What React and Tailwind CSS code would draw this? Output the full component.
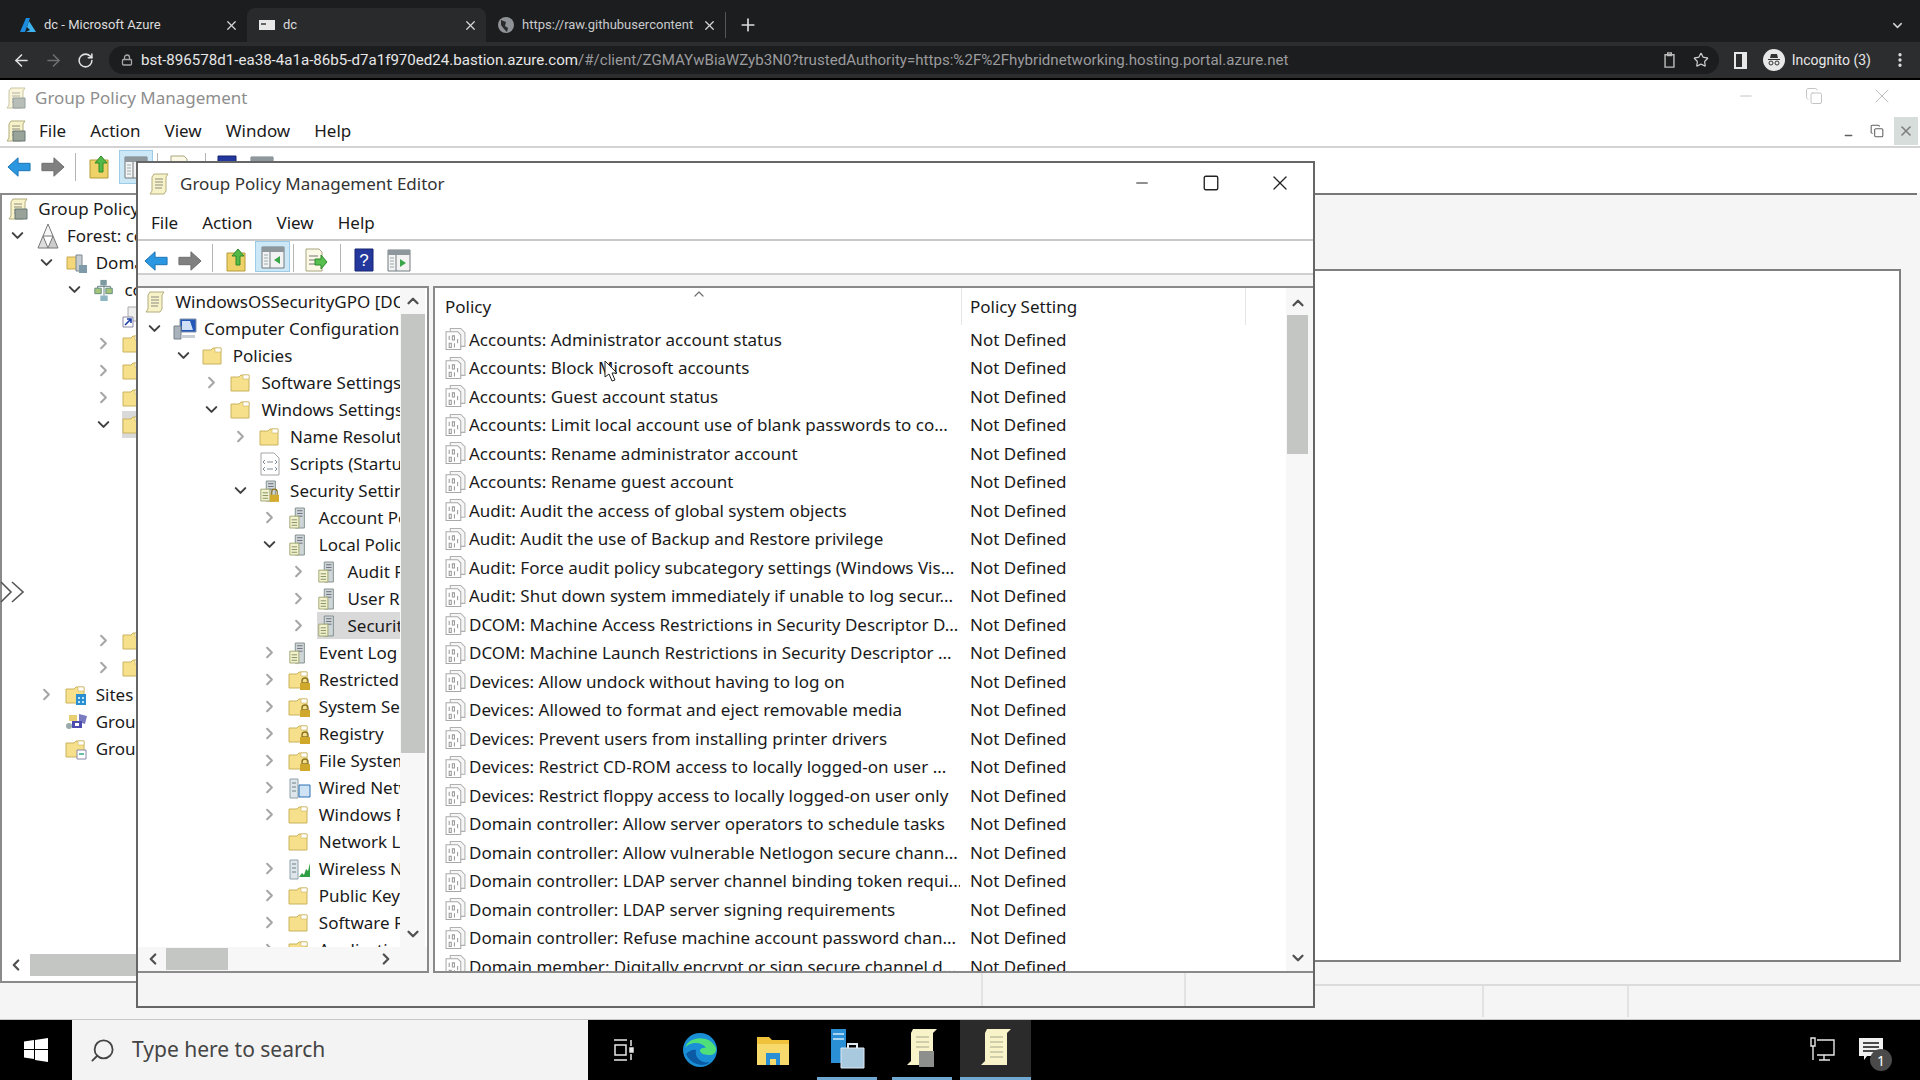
import { ArrowLeft, ArrowRight, RotateCw, Lock, Star, X, Plus, ChevronDown, ChevronRight, ChevronUp, ChevronLeft, MoreVertical, Search, Minus, Square, Copy } from 'lucide-react';

const policies = [
    'Accounts: Administrator account status',
    'Accounts: Block Microsoft accounts',
    'Accounts: Guest account status',
    'Accounts: Limit local account use of blank passwords to co...',
    'Accounts: Rename administrator account',
    'Accounts: Rename guest account',
    'Audit: Audit the access of global system objects',
    'Audit: Audit the use of Backup and Restore privilege',
    'Audit: Force audit policy subcategory settings (Windows Vis...',
    'Audit: Shut down system immediately if unable to log secur...',
    'DCOM: Machine Access Restrictions in Security Descriptor D...',
    'DCOM: Machine Launch Restrictions in Security Descriptor ...',
    'Devices: Allow undock without having to log on',
    'Devices: Allowed to format and eject removable media',
    'Devices: Prevent users from installing printer drivers',
    'Devices: Restrict CD-ROM access to locally logged-on user ...',
    'Devices: Restrict floppy access to locally logged-on user only',
    'Domain controller: Allow server operators to schedule tasks',
    'Domain controller: Allow vulnerable Netlogon secure chann...',
    'Domain controller: LDAP server channel binding token requi...',
    'Domain controller: LDAP server signing requirements',
    'Domain controller: Refuse machine account password chan...',
    'Domain member: Digitally encrypt or sign secure channel d...',
];

// depth, arrow (down / right / none), icon, label
const editorTree = [
    [0, 'none', 'scroll', 'WindowsOSSecurityGPO [DC'],
    [1, 'down', 'computer', 'Computer Configuration'],
    [2, 'down', 'folder', 'Policies'],
    [3, 'right', 'folder', 'Software Settings'],
    [3, 'down', 'folder', 'Windows Settings'],
    [4, 'right', 'folder', 'Name Resolution'],
    [4, 'none', 'script', 'Scripts (Startup'],
    [4, 'down', 'secure', 'Security Settings'],
    [5, 'right', 'server', 'Account Policies'],
    [5, 'down', 'server', 'Local Policies'],
    [6, 'right', 'server', 'Audit Policy'],
    [6, 'right', 'server', 'User Rights'],
    [6, 'right', 'server', 'Security Options', true],
    [5, 'right', 'server', 'Event Log'],
    [5, 'right', 'lockfolder', 'Restricted Groups'],
    [5, 'right', 'lockfolder', 'System Services'],
    [5, 'right', 'lockfolder', 'Registry'],
    [5, 'right', 'lockfolder', 'File System'],
    [5, 'right', 'wired', 'Wired Network'],
    [5, 'right', 'folder', 'Windows Firewall'],
    [5, 'none', 'folder', 'Network List'],
    [5, 'right', 'wireless', 'Wireless Network'],
    [5, 'right', 'folder', 'Public Key'],
    [5, 'right', 'folder', 'Software Restriction'],
    [5, 'right', 'folder', 'Application Control'],
];

const mainTree = [
    [0, 'none', 'manager', 'Group Policy Management'],
    [1, 'down', 'forest', 'Forest: contoso'],
    [2, 'down', 'domains', 'Domains'],
    [3, 'down', 'domain', 'contoso'],
    [4, 'none', 'shortcut', ''],
    [4, 'right', 'folder', ''],
    [4, 'right', 'folder', ''],
    [4, 'right', 'folder', ''],
    [4, 'down', 'folder', '', true],
    null, null, null, null, null, null, null,
    [4, 'right', 'folder', ''],
    [4, 'right', 'folder', ''],
    [2, 'right', 'sites', 'Sites'],
    [2, 'none', 'modeling', 'Group Policy Modeling'],
    [2, 'none', 'results', 'Group Policy Results'],
];

const Folder = ({ children }) => (
    <svg viewBox="0 0 22 22" className="h-[22px] w-[22px] shrink-0">
        <path d="M1 5h8l2-2h8v16H1z" fill="#f7e08c" stroke="#c9b25e" />
        <path d="M13 3h6v4h-6z" fill="#fff" stroke="#c9b25e" strokeWidth="0.6" />
        {children}
    </svg>
);

const TreeIcon = ({ type }) => {
    if (type === 'folder') return <Folder />;
    if (type === 'lockfolder')
        return (
            <Folder>
                <path d="M14 12a3 3 0 0 1 6 0v2h-6z" fill="none" stroke="#8a7420" strokeWidth="1.4" />
                <path d="M12 14h10v7H12z" fill="#d0a92c" />
            </Folder>
        );
    if (type === 'sites')
        return (
            <Folder>
                <path d="M11 10h10v11H11z" fill="#2a8fd0" />
                <path d="M13 13h2v2h-2zM17 13h2v2h-2zM13 17h2v2h-2zM17 17h2v2h-2z" fill="#bfe6fa" />
            </Folder>
        );
    if (type === 'results')
        return (
            <Folder>
                <path d="M12 12h9v9h-9z" fill="#fff" stroke="#88a" />
                <path d="M14 16h5" stroke="#3a8" strokeWidth="1.5" />
            </Folder>
        );
    if (type === 'modeling')
        return (
            <svg viewBox="0 0 24 22" className="h-[22px] w-[24px] shrink-0">
                <path d="M4 4h8v6H4z" fill="#e8cf72" />
                <path d="M14 3l8 2-2 8-6-2z" fill="#7a7ac0" />
                <path d="M7 10h10v7H7z" fill="#4b4bb0" />
                <circle cx="4" cy="15" r="3" fill="#9aa" />
                <path d="M10 12h4v3h-4z" fill="#fff" />
            </svg>
        );
    if (type === 'scroll' || type === 'manager')
        return (
            <svg viewBox="0 0 22 24" className="h-[24px] w-[22px] shrink-0">
                <path d="M6 2h14l-2 3v14l-2 3H2l2-3V5z" fill="#f7f2c8" stroke="#b3ad7e" />
                <path d="M7 7h8M7 10h8M7 13h8M7 16h7" stroke="#8d8d80" />
                {type === 'manager' && <path d="M8 12h12v10H8z" fill="#9aa39a" stroke="#677" />}
            </svg>
        );
    if (type === 'computer')
        return (
            <svg viewBox="0 0 24 22" className="h-[22px] w-[24px] shrink-0">
                <path d="M7 1h16v13H7z" fill="#2358b8" stroke="#8895a8" />
                <path d="M9 3l8 0 3 9H9z" fill="#cfe0f6" />
                <path d="M1 8h7v13H1z" fill="#aab2bb" stroke="#75808a" />
                <path d="M8 17h14v3H8z" fill="#c9ced4" />
            </svg>
        );
    if (type === 'forest')
        return (
            <svg viewBox="0 0 24 26" className="h-[26px] w-[24px] shrink-0">
                <path d="M12 1l5 12H7z" fill="#f6f6f6" stroke="#777" />
                <path d="M7 13l5 12H2z" fill="#ddd" stroke="#777" />
                <path d="M17 13l5 12H12z" fill="#ccc" stroke="#777" />
            </svg>
        );
    if (type === 'domains')
        return (
            <svg viewBox="0 0 24 24" className="h-[24px] w-[24px] shrink-0">
                <path d="M2 6h11v12H2z" fill="#f3d778" stroke="#c6a94e" />
                <path d="M11 4h6v16h-6z" fill="#c7ccd0" stroke="#7c8790" />
                <path d="M14 14h8v8h-8z" fill="#7f9aa8" />
            </svg>
        );
    if (type === 'domain')
        return (
            <svg viewBox="0 0 24 24" className="h-[24px] w-[22px] shrink-0">
                <path d="M8 1h7v6H8z" fill="#7d9aa0" />
                <path d="M2 10h7v6H2zM14 10h7v6h-7z" fill="#a4c47a" stroke="#5d8a7c" />
                <path d="M8 18h8v6H8z" fill="#8eb5c4" />
                <path d="M12 7v11M5 10V8h14v2" stroke="#5f7b80" fill="none" />
            </svg>
        );
    if (type === 'shortcut')
        return (
            <svg viewBox="0 0 20 22" className="h-[22px] w-[20px] shrink-0">
                <path d="M6 1h13v14H6z" fill="#eee" stroke="#aaa" />
                <path d="M1 11h10v10H1z" fill="#fff" stroke="#88a" />
                <path d="M3 19l6-6M5 13h4v4" stroke="#1c3fa8" strokeWidth="1.6" fill="none" />
            </svg>
        );
    if (type === 'script')
        return (
            <svg viewBox="0 0 22 24" className="h-[24px] w-[22px] shrink-0">
                <path d="M2 1h13l5 5v17H2z" fill="#fff" stroke="#a5a5a5" />
                <path d="M6 8l-2 2 2 2M16 8l2 2-2 2M6 15l-2 2 2 2M16 15l2 2-2 2M8 10h6M8 17h6" stroke="#7d8c98" fill="none" />
            </svg>
        );
    if (type === 'wired' || type === 'wireless')
        return (
            <svg viewBox="0 0 24 24" className="h-[24px] w-[24px] shrink-0">
                <path d="M2 3h8v19H2z" fill="#dfe6ea" stroke="#8fa0aa" />
                <path d="M4 7h4M4 11h4M4 15h4" stroke="#6b7f8a" />
                {type === 'wired' ? (
                    <path d="M11 9h11v12H11z" fill="#cfe3f5" stroke="#2a6fb3" />
                ) : (
                    <path d="M11 20l3-4 2 2 2-6 2 2 2-8v14z" fill="#2f9e44" />
                )}
            </svg>
        );
    // server style icons (security nodes)
    return (
        <svg viewBox="0 0 22 24" className="h-[24px] w-[20px] shrink-0">
            <path d="M8 1h10v22H8z" fill="#cfd6d8" stroke="#7c8a8a" />
            <path d="M10 4h6M10 7h6M10 10h6" stroke="#667" />
            <path d="M2 10h10v13H2z" fill="#f3f1cf" stroke="#9aa36a" />
            <path d="M4 14h6M4 17h6M4 20h6" stroke="#7a8a5a" />
            {type === 'secure' && <path d="M12 16h10v8H12z" fill="#d4ad2e" />}
            {type === 'secure' && <path d="M14 16v-3a3 3 0 0 1 6 0v3" fill="none" stroke="#8a7420" strokeWidth="1.4" />}
        </svg>
    );
};

const Arrow = ({ dir }) => {
    if (dir === 'down') return <ChevronDown size={19} strokeWidth={2.6} className="text-[#404040] shrink-0" />;
    if (dir === 'right') return <ChevronRight size={19} strokeWidth={2.6} className="text-[#a6a6a6] shrink-0" />;
    return <span className="w-[19px] shrink-0" />;
};

const TreeRow = ({ row, base = 7 }) => {
    if (!row) return <div className="h-[27px]" />;
    const [depth, arrow, icon, label, selected] = row;
    return (
        <div className="flex items-center h-[27px] whitespace-nowrap" style={{ marginLeft: base + (depth - 1) * 28.7 }}>
            <Arrow dir={arrow} />
            <div className={`flex items-center h-[27px] flex-1 ml-[9px] ${selected ? 'bg-[#d9d9d9]' : ''}`}>
                <span className="flex w-[31px] shrink-0 justify-start">
                    <TreeIcon type={icon} />
                </span>
                <span>{label}</span>
            </div>
        </div>
    );
};

const PolicyIcon = () => (
    <svg viewBox="0 0 20 22" className="h-[24px] w-[21px] shrink-0">
        <path d="M5 1h10l4 4v13H5z" fill="#f6f6f6" stroke="#b0b0b0" />
        <path d="M1 4h11l3 3v14H1z" fill="#fff" stroke="#a9a9a9" />
        <path d="M4 8v4M7 8h2v4H7zM4 15h2v4H4zM9 15v4M12 11v4" stroke="#9a9a9a" fill="none" />
    </svg>
);

const BackBtn = () => (
    <svg viewBox="0 0 26 22" className="h-[22px] w-[24px]">
        <path d="M1 11L12 1v6h13v8H12v6z" fill="#2a97e0" stroke="#1770b0" />
    </svg>
);
const FwdBtn = () => (
    <svg viewBox="0 0 26 22" className="h-[22px] w-[24px]">
        <path d="M25 11L14 1v6H1v8h13v6z" fill="#808080" stroke="#6a6a6a" />
    </svg>
);
const FolderUpBtn = () => (
    <svg viewBox="0 0 24 24" className="h-[24px] w-[24px]">
        <path d="M2 5h18v18H2z" fill="#efd267" stroke="#b59b3a" />
        <path d="M11 17V8H7l6-7 6 7h-4v9z" fill="#55b94a" stroke="#2e8a2a" />
    </svg>
);
const PaneBtn = ({ right }) => (
    <svg viewBox="0 0 24 24" className="h-[24px] w-[24px]">
        <path d="M1 2h22v21H1z" fill="#f3f3f3" stroke="#707a80" />
        <path d="M1 2h22v5H1z" fill="#8d979c" />
        <path d="M9 7v16" stroke="#707a80" />
        <path d="M3 10h4M3 13h4M3 16h4M3 19h4" stroke="#9aa" />
        <path d={right ? 'M13 11l6 4-6 4z' : 'M19 11l-6 4 6 4z'} fill="#3aa64a" />
    </svg>
);
const ExportBtn = () => (
    <svg viewBox="0 0 24 24" className="h-[24px] w-[24px]">
        <path d="M2 1h13l3 3v19H2z" fill="#fbf8e6" stroke="#a9a57e" />
        <path d="M5 8h9M5 12h6M5 16h6" stroke="#777" />
        <path d="M11 11h6V7l6 7-6 7v-4h-6z" fill="#57bf4e" stroke="#2e8a2a" />
    </svg>
);
const HelpBtn = () => (
    <svg viewBox="0 0 24 24" className="h-[24px] w-[24px]">
        <path d="M3 1h18v22H3z" fill="#23379c" stroke="#152470" />
        <text x="12" y="18" textAnchor="middle" fontSize="17" fill="#fff" fontFamily="Liberation Sans">?</text>
    </svg>
);

const Sep = () => <span className="w-px h-[28px] bg-[#b5b5b5] shrink-0" />;

const EditorToolbar = () => (
    <div className="flex items-end h-[34px] shrink-0 pl-[4px] pb-[1px] border-b-2 border-[#cfcfcf]">
        <span className="flex w-[28px] justify-center"><BackBtn /></span>
        <span className="flex w-[40px] justify-center"><FwdBtn /></span>
        <span className="w-[2px]" />
        <Sep />
        <span className="flex w-[42px] pl-[12px]"><FolderUpBtn /></span>
        <span className="flex w-[35px] h-[31px] items-center justify-center bg-[#cce8f6] border border-[#9ccbe6]"><PaneBtn /></span>
        <span className="w-[3px]" />
        <Sep />
        <span className="flex w-[44px] justify-center"><ExportBtn /></span>
        <span className="w-[2px]" />
        <Sep />
        <span className="flex w-[46px] justify-center"><HelpBtn /></span>
        <span className="flex w-[24px] justify-center"><PaneBtn right /></span>
    </div>
);

const MainToolbar = () => (
    <div className="flex items-center h-[36px] shrink-0 pl-[6px] pt-[2px]">
        <span className="flex w-[26px] justify-center"><BackBtn /></span>
        <span className="flex w-[42px] justify-center"><FwdBtn /></span>
        <span className="w-[1px]" />
        <Sep />
        <span className="flex w-[43px] pl-[12px]"><FolderUpBtn /></span>
        <span className="flex w-[34px] h-[34px] items-center justify-center bg-[#cce8f6] border border-[#9ccbe6]"><PaneBtn /></span>
        <span className="w-[4px]" />
        <Sep />
        <span className="flex w-[46px] justify-center"><ExportBtn /></span>
        <span className="w-[1px]" />
        <Sep />
        <span className="flex w-[42px] justify-center"><HelpBtn /></span>
        <span className="flex w-[28px] justify-center"><PaneBtn right /></span>
    </div>
);

const BackgroundWindow = () => (
    <div className="flex flex-col h-full bg-white text-[#1a1a1a]">
        <div className="flex items-center h-[34px] shrink-0 pt-[2px]">
            <span className="ml-[5px] flex w-[30px] opacity-70"><TreeIcon type="manager" /></span>
            <span className="text-[#8e8e8e]">Group Policy Management</span>
            <div className="ml-auto flex items-center -mt-[5px] text-[#bdbdbd]">
                <Minus size={18} strokeWidth={1.2} />
                <Copy size={18} strokeWidth={1.2} className="ml-[50px]" />
                <X size={24} strokeWidth={1} className="ml-[47px] mr-[26px]" />
            </div>
        </div>
        <div className="flex items-center h-[34px] shrink-0 pt-[2px] border-b-2 border-[#d3d3d3]">
            <span className="ml-[5px] flex w-[34px]"><TreeIcon type="manager" /></span>
            <div className="flex gap-[24px]">
                <span>File</span>
                <span>Action</span>
                <span>View</span>
                <span>Window</span>
                <span>Help</span>
            </div>
            <div className="ml-auto flex items-center h-[30px] mr-[2px] gap-[4px] text-[#606060]">
                <span className="flex h-[28px] w-[24px] items-center justify-center"><Minus size={11} strokeWidth={3} className="mt-[8px]" /></span>
                <span className="flex h-[28px] w-[26px] items-center justify-center"><Copy size={14} strokeWidth={1.8} /></span>
                <span className="flex h-[28px] w-[24px] items-center justify-center bg-[#d7dddb]"><X size={16} strokeWidth={2.4} className="text-[#7d7d7d]" /></span>
            </div>
        </div>
        <MainToolbar />
        <div className="flex flex-1 min-h-0 mt-[9px] bg-[#f5f5f5]">
            <div className="flex flex-col w-[136px] shrink-0 h-[790px] border-l-2 border-b-2 border-t-2 border-[#8a8a8a] bg-white overflow-hidden">
                <div className="flex-1 min-h-0 overflow-hidden">
                    {mainTree.map((row, i) => (
                        <TreeRow key={i} row={row} base={6} />
                    ))}
                </div>
                <div className="flex items-center h-[22px] shrink-0 mb-[5px]">
                    <ChevronLeft size={18} strokeWidth={3} className="ml-[5px] text-[#505050]" />
                    <span className="ml-[5px] flex-1 h-[22px] bg-[#c4c6c4]" />
                </div>
            </div>
            <div className="flex flex-col flex-1 min-w-0">
                <div className="ml-[1178px] h-[2px] bg-[#777] mr-[3px]" />
                <div className="ml-[1178px] mt-[74px] mr-[19px] h-[693px] border-t-2 border-r-2 border-b-2 border-[#808080] bg-white" />
                <div className="ml-[1178px] mt-[22px] flex h-[33px] border-t-2 border-[#dcdcdc]">
                    <span className="ml-[168px] w-[145px] border-l-2 border-[#e2e2e2]" />
                    <span className="border-l-2 border-[#e2e2e2]" />
                </div>
            </div>
        </div>
    </div>
);

const EditorWindow = () => (
    <div className="absolute left-[136px] top-[81px] flex flex-col w-[1179px] h-[847px] bg-white border-2 border-[#666] text-[#1a1a1a]">
        <div className="flex items-center h-[40px] shrink-0 pt-[2px]">
            <span className="ml-[10px] flex w-[32px]"><TreeIcon type="scroll" /></span>
            <span className="text-[#333]">Group Policy Management Editor</span>
            <div className="ml-auto flex items-center -mt-[2px] text-[#222]">
                <Minus size={18} strokeWidth={1.6} />
                <Square size={18} strokeWidth={1.8} className="ml-[51px]" />
                <X size={24} strokeWidth={1.3} className="ml-[48px] mr-[21px]" />
            </div>
        </div>
        <div className="flex items-center h-[38px] shrink-0 pl-[13px] pt-[4px] gap-[24px] border-b-2 border-[#c8c8c8]">
            <span>File</span>
            <span>Action</span>
            <span>View</span>
            <span>Help</span>
        </div>
        <EditorToolbar />
        <div className="flex flex-1 min-h-0 pt-[11px] gap-[4px] bg-[#f5f5f5]">
            <div className="relative flex flex-col w-[291px] shrink-0 border-t-2 border-r-2 border-b-2 border-[#8a8a8a] bg-white">
                <div className="flex flex-1 min-h-0">
                    <div className="w-[262px] shrink-0 overflow-hidden">
                        {editorTree.map((row, i) => (
                            <TreeRow key={i} row={row} />
                        ))}
                    </div>
                    <div className="flex flex-col items-center w-[25px] shrink-0 bg-[#f7f7f7]">
                        <ChevronUp size={18} strokeWidth={3} className="mt-[4px] text-[#505050]" />
                        <span className="mt-[4px] h-[439px] w-[24px] bg-[#c4c6c4]" />
                        <ChevronDown size={18} strokeWidth={3} className="mt-auto mb-[4px] text-[#505050]" />
                    </div>
                </div>
                <div className="flex items-center h-[24px] shrink-0 bg-[#f7f7f7]">
                    <ChevronLeft size={18} strokeWidth={3} className="ml-[6px] text-[#505050]" />
                    <span className="ml-[4px] h-[22px] w-[62px] bg-[#c4c6c4]" />
                    <ChevronRight size={18} strokeWidth={3} className="ml-[149px] text-[#505050]" />
                </div>
            </div>
            <div className="flex flex-1 min-w-0 border-t-2 border-l-2 border-b-2 border-[#8a8a8a] bg-white overflow-hidden">
                <div className="flex flex-col flex-1 min-w-0">
                    <div className="relative flex items-center h-[37px] shrink-0">
                        <span className="ml-[10px] w-[516px]">Policy</span>
                        <span className="h-[37px] w-px bg-[#e5e5e5]" />
                        <span className="ml-[8px] w-[275px]">Policy Setting</span>
                        <span className="h-[37px] w-px bg-[#e5e5e5]" />
                        <ChevronUp size={16} strokeWidth={1.8} className="absolute left-[256px] top-[-2px] text-[#707070]" />
                    </div>
                    <div className="flex-1 min-h-0 overflow-hidden">
                        {policies.map((p) => (
                            <div key={p} className="flex items-center h-[28.5px] whitespace-nowrap">
                                <span className="ml-[10px] flex w-[24px]"><PolicyIcon /></span>
                                <span className="w-[491px] overflow-hidden">{p}</span>
                                <span className="ml-[10px]">Not Defined</span>
                            </div>
                        ))}
                    </div>
                </div>
                <div className="flex flex-col items-center w-[27px] shrink-0 pr-[4px] bg-[#f7f7f7]">
                    <ChevronUp size={18} strokeWidth={3} className="mt-[6px] text-[#505050]" />
                    <span className="mt-[3px] h-[139px] w-[21px] bg-[#c4c6c4]" />
                    <ChevronDown size={18} strokeWidth={3} className="mt-auto mb-[4px] text-[#505050]" />
                </div>
            </div>
        </div>
        <div className="flex h-[33px] shrink-0 bg-[#f5f5f5]">
            <span className="ml-[843px] w-[203px] border-l-2 border-[#e2e2e2]" />
            <span className="border-l-2 border-[#e2e2e2]" />
        </div>
    </div>
);

const ChromeTab = ({ icon, title, active, muted }) => (
    <div className={`flex items-center w-[239px] h-[34px] pl-[12px] pr-[8px] gap-[8px] rounded-t-lg shrink-0 ${active ? 'bg-[#292a2c]' : ''}`}>
        {icon}
        <span className={`flex-1 overflow-hidden whitespace-nowrap text-[13px] ${muted ? 'text-[#c9cacc]' : 'text-[#dcdcdc]'}`}>{title}</span>
        <X size={15} strokeWidth={2} className="text-[#d5d5d5] shrink-0" />
    </div>
);

const ChromeBar = () => (
    <div className="shrink-0 font-['Roboto',sans-serif]">
        <div className="flex items-end h-[42px] pl-[8px] bg-[#1c1d1f]">
            <ChromeTab
                title="dc - Microsoft Azure"
                icon={
                    <svg viewBox="0 0 16 16" className="h-[16px] w-[16px] shrink-0">
                        <path d="M6 1h4l-5 14H0z" fill="#1c8ce0" />
                        <path d="M9 4l7 11H6l4-2-3-3z" fill="#3db4f0" />
                    </svg>
                }
            />
            <ChromeTab
                active
                title="dc"
                icon={
                    <svg viewBox="0 0 16 16" className="h-[16px] w-[16px] shrink-0">
                        <path d="M0 3h16v10H0z" fill="#e8e8e8" />
                        <path d="M2 6h5v2H2z" fill="#666" />
                    </svg>
                }
            />
            <ChromeTab
                muted
                title="https://raw.githubusercontent.com"
                icon={
                    <svg viewBox="0 0 16 16" className="h-[16px] w-[16px] shrink-0">
                        <circle cx="8" cy="8" r="8" fill="#8f9296" />
                        <path d="M3 3l5 2-1 4 3 2-1 4-3-3-3-4z" fill="#2a2b2d" />
                    </svg>
                }
            />
            <span className="h-[26px] w-px mb-[4px] bg-[#555]" />
            <Plus size={20} strokeWidth={2} className="ml-[12px] mb-[7px] text-[#dcdcdc]" />
            <ChevronDown size={15} strokeWidth={2.4} className="ml-auto mr-[15px] mb-[9px] text-[#d0d0d0]" />
        </div>
        <div className="flex items-center h-[38px] bg-[#2c2d2f] border-b-2 border-black">
            <ArrowLeft size={19} strokeWidth={2} className="ml-[12px] text-[#e0e0e0]" />
            <ArrowRight size={19} strokeWidth={2} className="ml-[13px] text-[#6f7073]" />
            <RotateCw size={17} strokeWidth={2.2} className="ml-[14px] text-[#e0e0e0]" />
            <div className="ml-[15px] flex items-center flex-1 h-[28px] pl-[12px] bg-[#1c1d1f] rounded-full">
                <Lock size={12} strokeWidth={2.6} className="text-[#a8a8a8]" />
                <span className="ml-[8px] text-[15.1px] whitespace-nowrap text-[#e6e6e6]">
                    bst-896578d1-ea38-4a1a-86b5-d7a1f970ed24.bastion.azure.com
                    <span className="text-[#9a9b9d]">/#/client/ZGMAYwBiaWZyb3N0?trustedAuthority=https:%2F%2Fhybridnetworking.hosting.portal.azure.net</span>
                </span>
                <svg viewBox="0 0 14 18" className="ml-auto h-[16px] w-[13px] text-[#bdbdbd]">
                    <path d="M2 3h10v14H2zM5 1h4v3H5z" fill="none" stroke="currentColor" strokeWidth="1.6" />
                </svg>
                <Star size={16} strokeWidth={1.8} className="ml-[17px] mr-[10px] text-[#cfcfcf]" />
            </div>
            <span className="ml-[15px] h-[17px] w-[13px] border-[2px] border-r-[5px] border-[#e8e8e8]" />
            <div className="ml-[16px] flex items-center gap-[7px] h-[28px]">
                <span className="flex h-[22px] w-[22px] items-center justify-center rounded-full bg-[#e8e8e8]">
                    <svg viewBox="0 0 16 16" className="h-[16px] w-[16px]">
                        <path d="M5 2h6l1 4H4zM2 7h12v1H2z" fill="#333" />
                        <circle cx="5" cy="11" r="2" fill="none" stroke="#333" />
                        <circle cx="11" cy="11" r="2" fill="none" stroke="#333" />
                    </svg>
                </span>
                <span className="text-[14px] text-[#e6e6e6]">Incognito (3)</span>
            </div>
            <MoreVertical size={18} strokeWidth={2.4} className="ml-[20px] mr-[11px] text-[#e0e0e0]" />
        </div>
    </div>
);

const Taskbar = () => (
    <div className="flex items-center h-[61px] shrink-0 bg-black border-t border-[#c8c8c8]">
        <span className="flex w-[72px] justify-center">
            <svg viewBox="0 0 24 24" className="h-[24px] w-[24px]">
                <path d="M0 3.5l10-1.4V11H0zM11 2L24 0v11H11zM0 12h10v9L0 19.6zM11 12h13v12l-13-2z" fill="#fff" />
            </svg>
        </span>
        <div className="flex items-center w-[516px] h-[60px] bg-[#f3f3f3] text-[#444]">
            <Search size={27} strokeWidth={1.6} className="ml-[17px] -scale-x-100" />
            <span className="ml-[16px] text-[21px]">Type here to search</span>
        </div>
        <span className="ml-[22px] flex w-[26px] justify-center">
            <svg viewBox="0 0 24 24" className="h-[24px] w-[24px]" fill="none" stroke="#e8e8e8" strokeWidth="1.5">
                <path d="M3 2h13M3 22h13M4 7h11v10H4zM20 2v6M20 16v6" />
                <path d="M19 10h3v4h-3z" fill="#e8e8e8" />
            </svg>
        </span>
        <span className="ml-[44px] flex w-[40px] justify-center">
            <svg viewBox="0 0 36 36" className="h-[36px] w-[36px]">
                <circle cx="18" cy="18" r="17" fill="#1a8fd6" />
                <path d="M3 16C6 4 28 2 34 16c1 8-7 8-13 6-6-3-2-7 3-6-4-7-17-6-21 0z" fill="#4fe07a" />
                <path d="M14 18c-2 8 6 14 14 12-7 6-20 2-24-8 3-3 7-5 10-4z" fill="#0c59a4" />
            </svg>
        </span>
        <span className="ml-[35px] flex w-[36px] justify-center">
            <svg viewBox="0 0 32 30" className="h-[30px] w-[32px]">
                <path d="M0 2h12l3 3h17v25H0z" fill="#f0c23c" />
                <path d="M0 9h32v21H0z" fill="#f8d96c" />
                <path d="M9 18h14v12h-4v-6h-6v6H9z" fill="#2b8fd6" />
            </svg>
        </span>
        <div className="ml-[26px] flex items-center justify-center w-[60px] h-[60px] border-b-[3px] border-[#6fa8d0]">
            <svg viewBox="0 0 36 42" className="h-[42px] w-[36px]">
                <path d="M2 1h15v34H2z" fill="#2b8fd6" />
                <path d="M4 6h11M4 11h11" stroke="#a8d4f4" strokeWidth="2" />
                <path d="M12 20h23v20H12z" fill="#a9c9de" stroke="#dfeaf2" />
                <path d="M19 20v-4h9v4" fill="none" stroke="#dfeaf2" strokeWidth="2" />
            </svg>
        </div>
        <div className="ml-[15px] flex items-center justify-center w-[60px] h-[60px] border-b-[3px] border-[#6fa8d0]">
            <svg viewBox="0 0 32 42" className="h-[42px] w-[32px]">
                <path d="M7 1h24l-4 4v32H1l4-4V5z" fill="#f8f3c8" />
                <path d="M10 9h13M10 14h13M10 19h13" stroke="#a8a78c" />
                <path d="M13 23h15v16H13z" fill="#8c8f8c" />
            </svg>
        </div>
        <div className="ml-[8px] flex items-center justify-center w-[71px] h-[60px] bg-[#2b2b2b] border-b-[3px] border-[#6fa8d0]">
            <svg viewBox="0 0 32 42" className="h-[42px] w-[32px]">
                <path d="M7 1h24l-4 4v32H1l4-4V5z" fill="#f8f3c8" />
                <path d="M10 9h13M10 14h13M10 19h13M10 24h13M10 29h13" stroke="#a8a78c" />
            </svg>
        </div>
        <span className="ml-auto flex w-[26px] justify-center">
            <svg viewBox="0 0 26 26" className="h-[26px] w-[26px]" fill="none" stroke="#e8e8e8" strokeWidth="1.4">
                <path d="M7 3h17v15H7M14 18v5M9 23h11M5 1H1v8h4zM3 9v14" />
            </svg>
        </span>
        <span className="relative ml-[22px] mr-[36px] flex w-[26px] justify-center">
            <svg viewBox="0 0 24 26" className="h-[26px] w-[24px]">
                <path d="M0 1h24v18H8l-3 4v-4H0z" fill="#f0f0f0" />
                <path d="M4 6h16M4 10h16M4 14h16" stroke="#111" strokeWidth="1.6" />
            </svg>
            <span className="absolute left-[12px] top-[12px] flex h-[22px] w-[22px] items-center justify-center rounded-full bg-[#4a4a4a] text-[14px] text-white">1</span>
        </span>
    </div>
);

export default function App() {
    return (
        <div className="flex flex-col w-[1920px] h-[1080px] overflow-hidden bg-black text-[17px] font-['Noto_Sans',sans-serif]">
            <ChromeBar />
            <div className="relative flex-1 min-h-0 overflow-hidden">
                <BackgroundWindow />
                <EditorWindow />
                <svg viewBox="0 0 26 24" className="absolute left-0 top-[500px] h-[24px] w-[26px]" fill="none" stroke="#555" strokeWidth="1.6">
                    <path d="M1 2l10 10L1 22M12 2l11 10-11 10" />
                </svg>
                <svg viewBox="0 0 14 22" className="absolute left-[604px] top-[280px] h-[22px] w-[14px]">
                    <path d="M1 1v16l4-3 3 7 3-1-3-7h5z" fill="#fff" stroke="#222" />
                </svg>
            </div>
            <Taskbar />
        </div>
    );
}
